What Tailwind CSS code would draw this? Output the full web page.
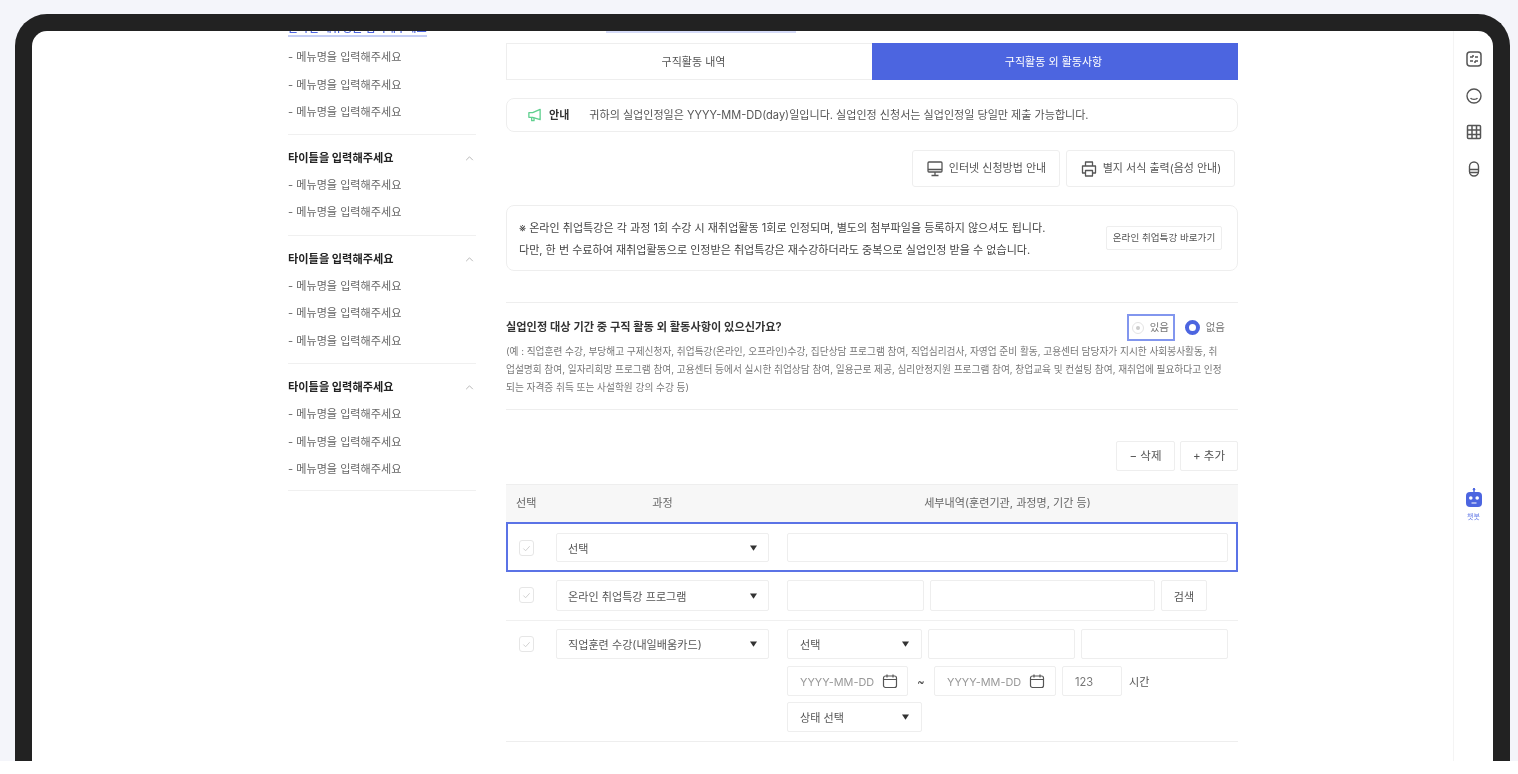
<!DOCTYPE html>
<html lang="ko">
<head>
  <meta charset="UTF-8">
  <meta name="viewport" content="width=device-width, initial-scale=1.0">
  <title>구직활동 외 활동사항</title>
  <script src="https://cdn.jsdelivr.net/npm/@tailwindcss/browser@4"></script>
</head>
<body class="bg-white font-['Inter','Noto_Sans_CJK_KR',sans-serif] text-[#333]">
  <div class="w-[1518px] h-[774px] overflow-hidden bg-white">
    <div class="h-[761px] bg-[#f4f5fa] pt-[14px] px-[8px] pl-[15px] blur-[0.7px]">
      <!-- FRAME -->
      <div class="w-[1495px] h-[747px] border-[17px] border-b-0 border-[#222222] rounded-t-[32px] bg-white overflow-hidden flex">

        <!-- SIDEBAR -->
        <aside class="ml-[256px] mt-[-11px] w-[188px] shrink-0 text-[11.1px] text-[#666]">
          <a class="block w-[139px] h-[17px] leading-[17px] whitespace-nowrap border-b-2 border-[#c5cef6] text-[#4c65e0] font-medium">온라인 메뉴명을 입력해주세요</a>
          <div class="border-b border-[#f0f0f0] pb-[7px] pt-[7px]">
            <p class="h-[27.5px] leading-[27.5px]">- 메뉴명을 입력해주세요</p>
            <p class="h-[27.5px] leading-[27.5px]">- 메뉴명을 입력해주세요</p>
            <p class="h-[27.5px] leading-[27.5px]">- 메뉴명을 입력해주세요</p>
          </div>
          <div class="border-b border-[#f0f0f0] pt-[10px] pb-[8px]">
            <div class="flex justify-between items-center h-[27px] pr-[2px]">
              <h3 class="text-[11.2px] font-bold text-[#222]">타이틀을 입력해주세요</h3>
              <svg class="w-[9px] h-[5px]" viewBox="0 0 10 6" fill="none" stroke="#aaa" stroke-width="1"><path d="M1 5l4-4 4 4"/></svg>
            </div>
            <p class="h-[27.5px] leading-[27.5px]">- 메뉴명을 입력해주세요</p>
            <p class="h-[27.5px] leading-[27.5px]">- 메뉴명을 입력해주세요</p>
          </div>
          <div class="border-b border-[#f0f0f0] pt-[10px] pb-[8px]">
            <div class="flex justify-between items-center h-[27px] pr-[2px]">
              <h3 class="text-[11.2px] font-bold text-[#222]">타이틀을 입력해주세요</h3>
              <svg class="w-[9px] h-[5px]" viewBox="0 0 10 6" fill="none" stroke="#aaa" stroke-width="1"><path d="M1 5l4-4 4 4"/></svg>
            </div>
            <p class="h-[27.5px] leading-[27.5px]">- 메뉴명을 입력해주세요</p>
            <p class="h-[27.5px] leading-[27.5px]">- 메뉴명을 입력해주세요</p>
            <p class="h-[27.5px] leading-[27.5px]">- 메뉴명을 입력해주세요</p>
          </div>
          <div class="border-b border-[#f0f0f0] pt-[10px] pb-[6px]">
            <div class="flex justify-between items-center h-[27px] pr-[2px]">
              <h3 class="text-[11.2px] font-bold text-[#222]">타이틀을 입력해주세요</h3>
              <svg class="w-[9px] h-[5px]" viewBox="0 0 10 6" fill="none" stroke="#aaa" stroke-width="1"><path d="M1 5l4-4 4 4"/></svg>
            </div>
            <p class="h-[27.5px] leading-[27.5px]">- 메뉴명을 입력해주세요</p>
            <p class="h-[27.5px] leading-[27.5px]">- 메뉴명을 입력해주세요</p>
            <p class="h-[27.5px] leading-[27.5px]">- 메뉴명을 입력해주세요</p>
          </div>
        </aside>

        <!-- MAIN -->
        <main class="ml-[30px] w-[732px] shrink-0">
          <div class="ml-[100px] w-[190px] h-[2px] bg-[#d5dbf8]"></div>

          <!-- tabs -->
          <div class="mt-[10px] flex h-[37px] text-[11px]">
            <div class="w-[366px] pl-[8px] pt-[2px] border border-r-0 border-[#eeeeee] flex items-center justify-center text-[#555]">구직활동 내역</div>
            <div class="w-[366px] pr-[3px] pt-[2px] bg-[#4c65e0] flex items-center justify-center text-white">구직활동 외 활동사항</div>
          </div>

          <!-- notice -->
          <div class="mt-[18px] h-[34px] border border-[#eeeeee] rounded-[8px] flex items-center pl-[20px] text-[11.05px] text-[#555]">
            <svg class="w-[15px] h-[16px] shrink-0" viewBox="0 0 16 16" fill="none" stroke="#5fd08f" stroke-width="1.4" stroke-linejoin="round"><path d="M14 2v11L6 10.5H2v-5h4L14 2z"/><path d="M5 10.5V14h2.5v-3"/></svg>
            <b class="ml-[7px] font-bold text-[#333]">안내</b>
            <span class="ml-[20px]">귀하의 실업인정일은 YYYY-MM-DD(day)일입니다. 실업인정 신청서는 실업인정일 당일만 제출 가능합니다.</span>
          </div>

          <!-- guide buttons -->
          <div class="mt-[18px] flex justify-end gap-[6px] pr-[3px] text-[11px] text-[#555]">
            <button class="w-[148px] h-[37px] border border-[#eeeeee] rounded-[3px] flex items-center justify-center gap-[5px]">
              <svg class="w-[18px] h-[18px]" viewBox="0 0 18 18" fill="none" stroke="#555" stroke-width="1.3"><rect x="2" y="2" width="14" height="10" rx="1"/><path d="M2 9.5h14M9 12v3.5M5.5 15.5h7"/></svg>
              인터넷 신청방법 안내
            </button>
            <button class="w-[169px] h-[37px] border border-[#eeeeee] rounded-[3px] flex items-center justify-center gap-[5px]">
              <svg class="w-[18px] h-[18px]" viewBox="0 0 18 18" fill="none" stroke="#555" stroke-width="1.3" stroke-linejoin="round"><path d="M5.5 6V2h7v4M5.5 13H2.5V6h13v7h-3"/><rect x="5.5" y="10.5" width="7" height="5.5"/></svg>
              별지 서식 출력(음성 안내)
            </button>
          </div>

          <!-- online lecture note -->
          <div class="mt-[18px] h-[66px] border border-[#eeeeee] rounded-[8px] flex items-center justify-between pl-[12px] pr-[15px] text-[11.05px] leading-[22px] text-[#444]">
            <p class="pt-[1px]">※ 온라인 취업특강은 각 과정 1회 수강 시 재취업활동 1회로 인정되며, 별도의 첨부파일을 등록하지 않으셔도 됩니다.<br>다만, 한 번 수료하여 재취업활동으로 인정받은 취업특강은 재수강하더라도 중복으로 실업인정 받을 수 없습니다.</p>
            <button class="w-[116px] h-[24px] border border-[#eeeeee] rounded-[2px] text-[9.6px] text-[#555] shrink-0 mb-[1px]">온라인 취업특강 바로가기</button>
          </div>

          <!-- question -->
          <section class="mt-[31px] h-[108px] border-y border-[#eeeeee] pt-[11px]">
            <div class="flex justify-between items-center h-[27px] pr-[13px]">
              <h2 class="text-[11.2px] font-semibold text-[#333] mb-[1px]">실업인정 대상 기간 중 구직 활동 외 활동사항이 있으신가요?</h2>
              <div class="flex items-center text-[10.5px] text-[#777]">
                <label class="w-[48px] h-[27px] border-2 border-[#8296ee] flex items-center pl-[3px] gap-[6px]">
                  <span class="w-[12px] h-[12px] rounded-full border border-[#e4e4e4] flex items-center justify-center"><span class="w-[4px] h-[4px] rounded-full bg-[#cccccc]"></span></span>
                  있음
                </label>
                <label class="ml-[10px] flex items-center gap-[6px]">
                  <span class="w-[15px] h-[15px] rounded-full border-[4.5px] border-[#4c65e0] bg-white"></span>
                  없음
                </label>
              </div>
            </div>
            <p class="mt-[2px] pr-[15px] text-[9.7px] leading-[18px] text-[#777]">(예 : 직업훈련 수강, 부당해고 구제신청자, 취업특강(온라인, 오프라인)수강, 집단상담 프로그램 참여, 직업심리검사, 자영업 준비 활동, 고용센터 담당자가 지시한 사회봉사활동, 취업설명회 참여, 일자리희망 프로그램 참여, 고용센터 등에서 실시한 취업상담 참여, 일용근로 제공, 심리안정지원 프로그램 참여, 창업교육 및 컨설팅 참여, 재취업에 필요하다고 인정되는 자격증 취득 또는 사설학원 강의 수강 등)</p>
          </section>

          <!-- add / delete -->
          <div class="mt-[31px] flex justify-end gap-[5px] text-[11.5px] text-[#555]">
            <button class="w-[59px] h-[30px] pt-[2px] border border-[#eeeeee] rounded-[2px]">− 삭제</button>
            <button class="w-[58px] h-[30px] pt-[2px] border border-[#eeeeee] rounded-[2px]">+ 추가</button>
          </div>

          <!-- table -->
          <div class="mt-[13px] grid grid-cols-[50px_231px_1fr] h-[38px] items-center bg-[#f7f7f7] border-t border-[#eeeeee] text-[11.1px] text-[#666]">
            <div class="pl-[10px]">선택</div>
            <div class="w-[213px] text-center">과정</div>
            <div class="text-center pr-[10px]">세부내역(훈련기관, 과정명, 기간 등)</div>
          </div>

          <!-- row: 선택 -->
          <div class="grid grid-cols-[50px_231px_1fr] h-[50px] pt-[11px] outline-2 -outline-offset-2 outline-[#5b73e6] text-[11.1px] text-[#555]">
            <div class="pl-[13px] pt-[7px]"><span class="w-[15px] h-[16px] border border-[#e6e6e6] rounded-[3px] flex items-center justify-center"><svg class="w-[9px] h-[9px]" viewBox="0 0 10 10" fill="none" stroke="#ccc" stroke-width="1"><path d="M1.5 5l2.5 2.5 4.5-5"/></svg></span></div>
            <div class="w-[213px] h-[29px] border border-[#eeeeee] rounded-[2px] flex items-center justify-between pl-[11px] pr-[11px]"><span class="mt-[3px]">선택</span><svg class="w-[7px] h-[6px]" viewBox="0 0 8 6" fill="#333"><path d="M0 0h8L4 6z"/></svg></div>
            <div class="pr-[10px]"><input class="w-full h-[29px] border border-[#eeeeee] rounded-[2px]"></div>
          </div>

          <!-- row: 온라인 -->
          <div class="grid grid-cols-[50px_231px_1fr] h-[49px] pt-[8px] border-b border-[#f0f0f0] text-[11.1px] text-[#555]">
            <div class="pl-[13px] pt-[7px]"><span class="w-[15px] h-[16px] border border-[#e6e6e6] rounded-[3px] flex items-center justify-center"><svg class="w-[9px] h-[9px]" viewBox="0 0 10 10" fill="none" stroke="#ccc" stroke-width="1"><path d="M1.5 5l2.5 2.5 4.5-5"/></svg></span></div>
            <div class="w-[213px] h-[31px] border border-[#eeeeee] rounded-[2px] flex items-center justify-between pl-[11px] pr-[11px]"><span class="mt-[3px]">온라인 취업특강 프로그램</span><svg class="w-[7px] h-[6px]" viewBox="0 0 8 6" fill="#333"><path d="M0 0h8L4 6z"/></svg></div>
            <div class="flex gap-[6px]">
              <input class="w-[137px] h-[31px] border border-[#eeeeee] rounded-[2px]">
              <input class="w-[225px] h-[31px] border border-[#eeeeee] rounded-[2px]">
              <button class="w-[46px] h-[31px] pt-[3px] border border-[#eeeeee] rounded-[2px]">검색</button>
            </div>
          </div>

          <!-- row: 직업훈련 -->
          <div class="grid grid-cols-[50px_231px_1fr] h-[121px] pt-[8px] border-b border-[#eeeeee] text-[11.1px] text-[#555]">
            <div class="pl-[13px] pt-[7px]"><span class="w-[15px] h-[16px] border border-[#e6e6e6] rounded-[3px] flex items-center justify-center"><svg class="w-[9px] h-[9px]" viewBox="0 0 10 10" fill="none" stroke="#ccc" stroke-width="1"><path d="M1.5 5l2.5 2.5 4.5-5"/></svg></span></div>
            <div class="w-[213px] h-[30px] border border-[#eeeeee] rounded-[2px] flex items-center justify-between pl-[11px] pr-[11px]"><span class="mt-[3px]">직업훈련 수강(내일배움카드)</span><svg class="w-[7px] h-[6px]" viewBox="0 0 8 6" fill="#333"><path d="M0 0h8L4 6z"/></svg></div>
            <div class="flex flex-col gap-[6.5px]">
              <div class="flex gap-[6px]">
                <div class="w-[135px] h-[30px] border border-[#eeeeee] rounded-[2px] flex items-center justify-between px-[12px]"><span class="mt-[3px]">선택</span><svg class="w-[7px] h-[6px]" viewBox="0 0 8 6" fill="#333"><path d="M0 0h8L4 6z"/></svg></div>
                <input class="w-[147px] h-[30px] border border-[#eeeeee] rounded-[2px]">
                <input class="w-[147px] h-[30px] border border-[#eeeeee] rounded-[2px]">
              </div>
              <div class="flex items-center h-[30px] text-[#999]">
                <div class="w-[121px] h-[30px] border border-[#eeeeee] rounded-[2px] flex items-center justify-between pl-[12px] pr-[9px]"><span class="mt-[3px] text-[10.9px]">YYYY-MM-DD</span>
                  <svg class="w-[16px] h-[16px]" viewBox="0 0 16 16" fill="none" stroke="#555" stroke-width="1.2"><rect x="1.5" y="3" width="13" height="11.5" rx="2"/><path d="M1.5 6.5h13M5 1.5v3M11 1.5v3M5 10h.01M8 10h.01M11 10h.01"/></svg>
                </div>
                <span class="w-[26px] text-center text-[#333] mt-[3px]">~</span>
                <div class="w-[122px] h-[30px] border border-[#eeeeee] rounded-[2px] flex items-center justify-between pl-[12px] pr-[10px]"><span class="mt-[3px] text-[10.9px]">YYYY-MM-DD</span>
                  <svg class="w-[16px] h-[16px]" viewBox="0 0 16 16" fill="none" stroke="#555" stroke-width="1.2"><rect x="1.5" y="3" width="13" height="11.5" rx="2"/><path d="M1.5 6.5h13M5 1.5v3M11 1.5v3M5 10h.01M8 10h.01M11 10h.01"/></svg>
                </div>
                <div class="ml-[6px] w-[60px] h-[30px] border border-[#eeeeee] rounded-[2px] flex items-center pl-[12px] text-[#777]"><span class="mt-[3px]">123</span></div>
                <span class="ml-[7px] mt-[3px] text-[#555]">시간</span>
              </div>
              <div class="w-[135px] h-[30px] border border-[#eeeeee] rounded-[2px] flex items-center justify-between px-[12px]"><span class="mt-[3px]">상태 선택</span><svg class="w-[7px] h-[6px]" viewBox="0 0 8 6" fill="#333"><path d="M0 0h8L4 6z"/></svg></div>
            </div>
          </div>
        </main>

        <!-- RIGHT RAIL -->
        <div class="ml-[215px] w-[40px] border-l border-[#f4f4f4] flex flex-col items-center pt-[20px]">
          <div class="flex flex-col items-center gap-[20.7px]">
            <svg class="w-[16px] h-[16px]" viewBox="0 0 16 16" fill="none" stroke="#555" stroke-width="1.5"><rect x="1" y="1" width="14" height="14" rx="3"/><path d="M4 6h3M9 6h3M4 10h3M9 10h3M7 4v2M9 10v2"/></svg>
            <svg class="w-[16px] h-[16px]" viewBox="0 0 16 16" fill="none" stroke="#555" stroke-width="1.4"><circle cx="8" cy="8" r="7"/><path d="M4.5 10c1 1.8 6 1.8 7 0"/></svg>
            <svg class="w-[16px] h-[16px]" viewBox="0 0 16 16" fill="none" stroke="#555" stroke-width="1.5"><rect x="1.5" y="1.5" width="13" height="13" rx="1"/><path d="M1.5 6h13M1.5 10.5h13M6 1.5v13M10.5 1.5v13"/></svg>
            <svg class="w-[16px] h-[16px]" viewBox="0 0 16 16" fill="none" stroke="#555" stroke-width="1.4"><rect x="3.5" y="1" width="9" height="14" rx="4.5"/><path d="M3.5 8.5h9M3.5 11.5h9"/></svg>
          </div>
          <div class="mt-[311px] flex flex-col items-center">
            <svg class="w-[18px] h-[20px]" viewBox="0 0 18 20"><path d="M9 0v4" stroke="#4c65e0" stroke-width="1.4"/><circle cx="9" cy="1.2" r="1.2" fill="#4c65e0"/><rect x="1" y="4" width="16" height="15" rx="4" fill="#4c65e0"/><circle cx="5.8" cy="10" r="1.8" fill="#fff"/><circle cx="12.2" cy="10" r="1.8" fill="#fff"/><path d="M6.5 15h5" stroke="#fff" stroke-width="1.2"/></svg>
            <span class="mt-[4px] text-[7px] text-[#6b80e8]">챗봇</span>
          </div>
        </div>
      </div>
    </div>
  </div>
</body>
</html>
